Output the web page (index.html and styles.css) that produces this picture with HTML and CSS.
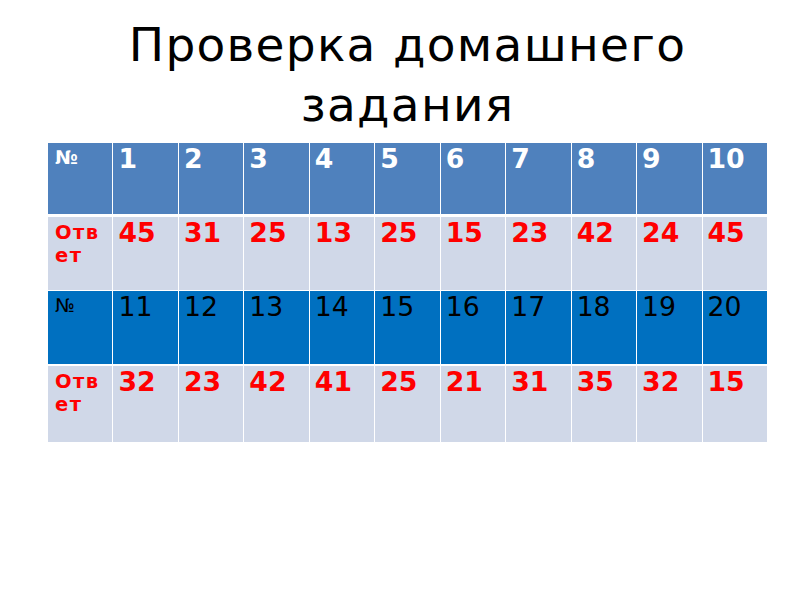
FILE: index.html
```html
<!DOCTYPE html>
<html lang="ru">
<head>
<meta charset="utf-8">
<title>Проверка домашнего задания</title>
<link rel="stylesheet" href="styles.css">
</head>
<body>
<div class="slide">
  <h1 class="title">Проверка домашнего<br>задания</h1>
  <div class="table">
    <div class="row row-head">
      <div class="cell label-no">№</div>
      <div class="cell num">1</div>
      <div class="cell num">2</div>
      <div class="cell num">3</div>
      <div class="cell num">4</div>
      <div class="cell num">5</div>
      <div class="cell num">6</div>
      <div class="cell num">7</div>
      <div class="cell num">8</div>
      <div class="cell num">9</div>
      <div class="cell num">10</div>
    </div>
    <div class="row row-ans row-ans1">
      <div class="cell label-ans">Отв<wbr>ет</div>
      <div class="cell num">45</div>
      <div class="cell num">31</div>
      <div class="cell num">25</div>
      <div class="cell num">13</div>
      <div class="cell num">25</div>
      <div class="cell num">15</div>
      <div class="cell num">23</div>
      <div class="cell num">42</div>
      <div class="cell num">24</div>
      <div class="cell num">45</div>
    </div>
    <div class="row row-head2">
      <div class="cell label-no">№</div>
      <div class="cell num">11</div>
      <div class="cell num">12</div>
      <div class="cell num">13</div>
      <div class="cell num">14</div>
      <div class="cell num">15</div>
      <div class="cell num">16</div>
      <div class="cell num">17</div>
      <div class="cell num">18</div>
      <div class="cell num">19</div>
      <div class="cell num">20</div>
    </div>
    <div class="row row-ans row-ans2">
      <div class="cell label-ans">Отв<wbr>ет</div>
      <div class="cell num">32</div>
      <div class="cell num">23</div>
      <div class="cell num">42</div>
      <div class="cell num">41</div>
      <div class="cell num">25</div>
      <div class="cell num">21</div>
      <div class="cell num">31</div>
      <div class="cell num">35</div>
      <div class="cell num">32</div>
      <div class="cell num">15</div>
    </div>
  </div>
</div>
</body>
</html>
```

FILE: styles.css
```css
* { box-sizing: border-box; }
html, body {
  margin: 0;
  padding: 0;
  background: #ffffff;
}
body {
  font-family: "DejaVu Sans", Verdana, sans-serif;
  width: 800px;
  height: 600px;
  overflow: hidden;
}
.slide {
  padding: 15px 33px 0 48px;
}
.title {
  margin: 0;
  font-weight: normal;
  font-size: 47px;
  letter-spacing: 1.3px;
  line-height: 60px;
  text-align: center;
  color: #000;
  width: 719px;
}
.table {
  margin-top: 8px;
  width: 719px;
  display: flex;
  flex-direction: column;
}
.row {
  display: grid;
  grid-template-columns: repeat(11, 1fr);
  column-gap: 1px;
  background: #ffffff;
}
.cell {
  padding: 0 4px 0 5px;
  font-size: 26.7px;
  line-height: 1.164;
  white-space: nowrap;
}
.row-head {
  height: 71px;
  margin-bottom: 3px;
}
.row-head .cell {
  background: #4f81bd;
  color: #ffffff;
  font-weight: bold;
}
.row-ans .cell {
  background: #d0d8e8;
  color: #ff0000;
  font-weight: bold;
}
.row-ans1 {
  height: 73px;
  margin-bottom: 1px;
}
.row-head2 {
  height: 73px;
  margin-bottom: 2px;
}
.row-head2 .cell {
  background: #0070c0;
  color: #000000;
}
.row-ans2 {
  height: 76px;
}
.cell.label-no {
  font-size: 19px;
  padding: 3px 4px 0 7px;
}
.cell.label-ans {
  font-size: 19.5px;
  letter-spacing: 1.4px;
  line-height: 23px;
  white-space: normal;
  padding: 4px 6px 0 7px;
}
```
